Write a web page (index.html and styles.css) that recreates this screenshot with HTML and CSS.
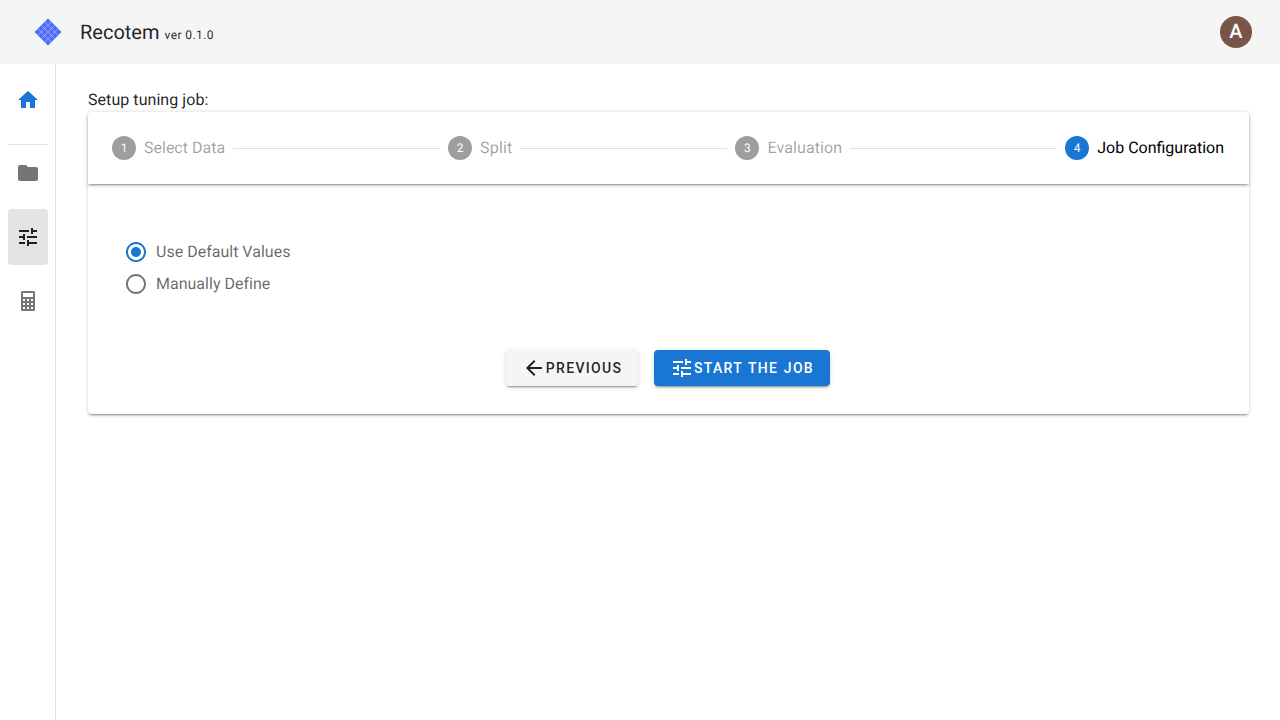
FILE: index.html
```html
<!DOCTYPE html>
<html lang="en">
<head>
<meta charset="utf-8">
<title>Recotem</title>
<link rel="stylesheet" href="styles.css">
</head>
<body>
<header class="appbar">
  <svg class="logo" viewBox="0 0 28 28"><path class="logo-fill" d="M14 0.500 27.500 14 14 27.500 0.500 14z"/><path class="logo-grid" d="M7.250 7.250 20.750 20.750M3.880 10.630 17.380 24.130M10.630 3.880 24.130 17.380M20.750 7.250 7.250 20.750M24.130 10.630 10.630 24.130M17.380 3.880 3.880 17.380"/></svg>
  <div class="brand"><span class="brand-name">Recotem</span><span class="brand-ver">ver 0.1.0</span></div>
  <div class="avatar">A</div>
</header>
<div class="shell">
  <nav class="rail">
    <a class="rail-item"><svg class="icon home" viewBox="0 0 24 24"><path d="M10 20v-6h4v6h5v-8h3L12 3 2 12h3v8z"/></svg></a>
    <hr class="rail-div">
    <a class="rail-item"><svg class="icon grey" viewBox="0 0 24 24"><path d="M10 4H4c-1.100 0-1.990.9-1.990 2L2 18c0 1.100.9 2 2 2h16c1.100 0 2-.9 2-2V8c0-1.100-.9-2-2-2h-8l-2-2z"/></svg></a>
    <a class="rail-item active"><svg class="icon" viewBox="0 0 24 24"><path d="M3 17v2h6v-2H3zM3 5v2h10V5H3zm10 16v-2h8v-2h-8v-2h-2v6h2zM7 9v2H3v2h4v2h2V9H7zm14 4v-2H11v2h10zm-6-4h2V7h4V5h-4V3h-2v6z"/></svg></a>
    <a class="rail-item"><svg class="icon grey" viewBox="0 0 24 24"><path fill-rule="evenodd" d="M6.500 2h11A1.500 1.500 0 0 1 19 3.500v17a1.500 1.500 0 0 1-1.500 1.500h-11A1.500 1.500 0 0 1 5 20.500v-17A1.500 1.500 0 0 1 6.500 2zM7 4v4h10V4zM7 10v2h2v-2zm4 0v2h2v-2zm4 0v2h2v-2zM7 14v2h2v-2zm4 0v2h2v-2zm4 0v2h2v-2zM7 18v2h2v-2zm4 0v2h2v-2zm4 0v2h2v-2z"/></svg></a>
  </nav>
  <main class="main">
    <div class="page-title">Setup tuning job:</div>
    <section class="card">
      <div class="stepper">
        <div class="step"><span class="step-num">1</span><span class="step-label">Select Data</span></div>
        <div class="line"></div>
        <div class="step"><span class="step-num">2</span><span class="step-label wide">Split</span></div>
        <div class="line"></div>
        <div class="step"><span class="step-num">3</span><span class="step-label mid">Evaluation</span></div>
        <div class="line"></div>
        <div class="step current"><span class="step-num">4</span><span class="step-label">Job Configuration</span></div>
      </div>
      <div class="body">
        <div class="radios">
          <label class="radio on"><svg class="radio-mark" viewBox="0 0 24 24"><path d="M12 20c-4.420 0-8-3.580-8-8s3.580-8 8-8 8 3.580 8 8-3.580 8-8 8m0-18C6.480 2 2 6.480 2 12s4.480 10 10 10 10-4.480 10-10S17.520 2 12 2m0 5c-2.760 0-5 2.240-5 5s2.240 5 5 5 5-2.240 5-5-2.240-5-5-5z"/></svg>Use Default Values</label>
          <label class="radio"><svg class="radio-mark" viewBox="0 0 24 24"><path d="M12 20c-4.420 0-8-3.580-8-8s3.580-8 8-8 8 3.580 8 8-3.580 8-8 8m0-18C6.480 2 2 6.480 2 12s4.480 10 10 10 10-4.480 10-10S17.520 2 12 2z"/></svg>Manually Define</label>
        </div>
        <div class="actions">
          <button class="btn btn-light"><svg class="btn-icon" viewBox="0 0 24 24"><path d="M20 11H7.830l5.590-5.590L12 4l-8 8 8 8 1.410-1.410L7.830 13H20v-2z"/></svg>Previous</button>
          <button class="btn btn-primary"><svg class="btn-icon" viewBox="0 0 24 24"><path d="M3 17v2h6v-2H3zM3 5v2h10V5H3zm10 16v-2h8v-2h-8v-2h-2v6h2zM7 9v2H3v2h4v2h2V9H7zm14 4v-2H11v2h10zm-6-4h2V7h4V5h-4V3h-2v6z"/></svg>Start the job</button>
        </div>
      </div>
    </section>
  </main>
</div>
</body>
</html>
```
FILE: styles.css
```css
* { box-sizing: border-box; }
html, body { height: 100%; }
html { text-rendering: geometricPrecision; -webkit-font-smoothing: antialiased; }
body {
  margin: 0;
  font-family: Roboto, "Liberation Sans", sans-serif;
  font-size: 16px;
  color: rgba(0,0,0,.87);
  background: #fff;
  display: flex;
  flex-direction: column;
  overflow: hidden;
}
.appbar {
  height: 64px;
  flex: none;
  background: #f5f5f5;
  display: flex;
  align-items: center;
  padding: 0 28px 0 34px;
}
.logo { width: 28px; height: 28px; }
.logo-fill { fill: #4d6bfe; }
.logo-grid { fill: none; stroke: #a9b9ff; stroke-width: .8; }
.brand { margin-left: 18px; display: flex; align-items: baseline; flex: 1; }
.brand-name { font-size: 20px; }
.brand-ver { font-size: 12px; margin-left: 5px; letter-spacing: .4px; }
.avatar {
  width: 32px; height: 32px; border-radius: 50%;
  background: #795548; color: #fff;
  display: flex; align-items: center; justify-content: center;
  font-size: 20px; font-weight: 500;
  padding-bottom: 3px;
}
.shell { flex: 1; display: flex; min-height: 0; }
.rail {
  width: 56px; flex: none;
  border-right: 1px solid #e0e0e0;
  padding: 8px 8px 0 8px;
  display: flex; flex-direction: column;
}
.rail-item {
  height: 56px;
  width: 40px;
  flex: none;
  display: flex; align-items: center; justify-content: center;
  border-radius: 4px;
  margin-bottom: 8px;
}
.rail-div { height: 1px; width: 40px; border: 0; background: #e0e0e0; margin: 8px 0 0; flex: none; }
.rail-item.active { background: #e4e4e4; }
.icon { width: 24px; height: 24px; fill: #212121; }
.icon.home { fill: #1976d2; }
.icon.grey { fill: #757575; }
.main { flex: 1; padding: 24px 31px 0 32px; min-width: 0; }
.page-title { line-height: 24px; letter-spacing: .06px; }
.card {
  background: #fff;
  border-radius: 4px;
  box-shadow: 0 3px 1px -2px rgba(0,0,0,.2), 0 2px 2px 0 rgba(0,0,0,.14), 0 1px 5px 0 rgba(0,0,0,.12);
}
.stepper {
  height: 72px;
  padding: 0 24px 1px;
  display: flex; align-items: center;
  border-radius: 4px 4px 0 0;
  box-shadow: 0 3px 1px -2px rgba(0,0,0,.2), 0 2px 2px 0 rgba(0,0,0,.14), 0 1px 5px 0 rgba(0,0,0,.12);
}
.step { display: flex; align-items: center; font-size: 16px; color: rgba(0,0,0,.38); }
.step-label.wide { letter-spacing: .18px; }
.step-label.mid { letter-spacing: .1px; }
.step-num {
  width: 24px; height: 24px; border-radius: 50%;
  background: #9e9e9e; color: #fff;
  font-size: 12px;
  display: flex; align-items: center; justify-content: center;
  margin-right: 8px;
}
.step.current { color: rgba(0,0,0,1); }
.step.current .step-num { background: #1976d2; }
.line { flex: 1; max-width: 207px; height: 1px; background: #e0e0e0; margin: 1px 8px 0; }
.body { padding: 52px 0 28px; }
.radios { padding-left: 36px; display: flex; flex-direction: column; }
.radio {
  height: 32px;
  padding-bottom: 1px;
  display: flex; align-items: center;
  color: rgba(0,0,0,.6);
  letter-spacing: .01px;
  gap: 8px;
}
.radio-mark { width: 24px; height: 24px; fill: #757575; flex: none; position: relative; top: .5px; }
.radio.on .radio-mark { fill: #1976d2; }
.actions { margin-top: 50px; padding-right: 1px; display: flex; justify-content: center; gap: 16px; }
.btn {
  height: 36px;
  border: 0;
  padding: 0;
  border-radius: 4px;
  display: flex; align-items: center; justify-content: center;
  font: 500 14px/36px Roboto, "Liberation Sans", sans-serif;
  letter-spacing: 1.3px;
  word-spacing: .8px;
  text-transform: uppercase;
  box-shadow: 0 3px 1px -2px rgba(0,0,0,.2), 0 2px 2px 0 rgba(0,0,0,.14), 0 1px 5px 0 rgba(0,0,0,.12);
}
.btn-icon { width: 24px; height: 24px; fill: currentColor; flex: none; }
.btn-light { width: 132px; background: #f5f5f5; color: rgba(0,0,0,.87); }
.btn-primary { width: 176px; background: #1976d2; color: #fff; }
```
